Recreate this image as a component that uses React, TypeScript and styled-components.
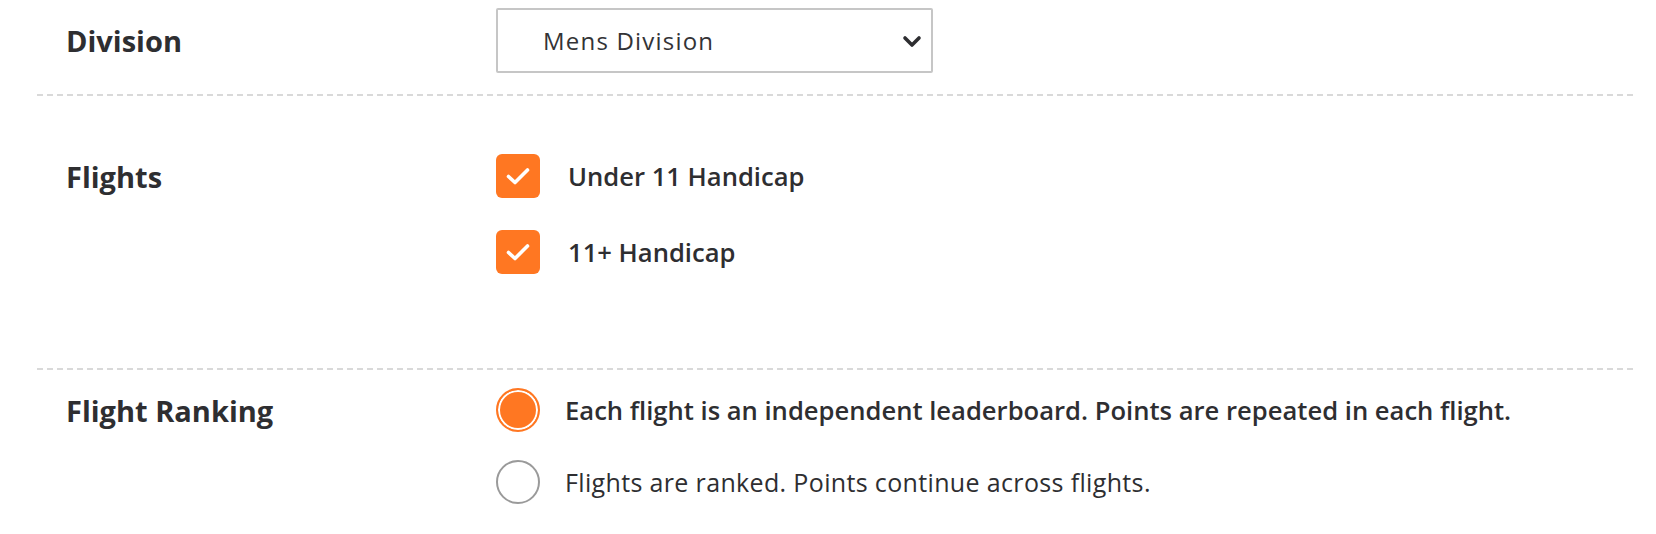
import React, { FC, ReactNode } from 'react';
import styled, { createGlobalStyle } from 'styled-components';

const GlobalStyle = createGlobalStyle`
    html, body {
        margin: 0;
        padding: 0;
        background: #ffffff;
    }
    body {
        font-family: 'Open Sans', Lato, sans-serif;
        color: #2e2e31;
    }
`;

const ORANGE = '#ff7722';

const StyledPage = styled.div`
    width: 1656px;
    padding: 0 19px 0 37px;
    box-sizing: border-box;
`;

const StyledRow = styled.div<{ $padTop: number; $padBottom: number; $divider: boolean }>`
    display: grid;
    grid-template-columns: 459px 1fr;
    align-items: start;
    padding-top: ${(p) => p.$padTop}px;
    padding-bottom: ${(p) => p.$padBottom}px;
    background: ${(p) =>
        p.$divider
            ? 'repeating-linear-gradient(to right, #d9d9d9 0 6px, transparent 6px 10px) left bottom / 100% 2px no-repeat'
            : 'none'};
`;

const StyledLabel = styled.div<{ $height: number }>`
    display: flex;
    align-items: center;
    height: ${(p) => p.$height}px;
    padding-left: 29px;
    font-size: 29px;
    font-weight: 700;
    color: #2e2e31;
`;

const StyledControls = styled.div<{ $gap: number }>`
    display: flex;
    flex-direction: column;
    gap: ${(p) => p.$gap}px;
`;

const StyledSelectBox = styled.div`
    position: relative;
    display: flex;
    align-items: center;
    justify-content: space-between;
    width: 437px;
    height: 65px;
    box-sizing: border-box;
    border: 2px solid #c6c6c6;
    border-radius: 2px;
    padding: 0 9px 0 45px;
    font-size: 24px;
    letter-spacing: 1.2px;
    color: #333336;
`;

const StyledOption = styled.label`
    display: flex;
    align-items: center;
    cursor: pointer;
`;

const StyledCheckbox = styled.span`
    display: flex;
    align-items: center;
    justify-content: center;
    width: 44px;
    height: 44px;
    flex: none;
    border-radius: 6px;
    background: ${ORANGE};
`;

const StyledRadio = styled.span<{ $checked: boolean }>`
    width: 44px;
    height: 44px;
    flex: none;
    box-sizing: border-box;
    border-radius: 50%;
    border: 2px solid ${(p) => (p.$checked ? ORANGE : '#9a9a9a')};
    background: ${(p) => (p.$checked ? ORANGE : '#ffffff')};
    box-shadow: ${(p) => (p.$checked ? 'inset 0 0 0 2px #ffffff' : 'none')};
`;

const StyledOptionText = styled.span<{ $bold: boolean; $gap: number }>`
    margin-left: ${(p) => p.$gap}px;
    font-size: ${(p) => (p.$bold ? 25.6 : 25)}px;
    font-weight: ${(p) => (p.$bold ? 600 : 400)};
    letter-spacing: ${(p) => (p.$bold ? 0 : 0.35)}px;
    color: #2e2e31;
    white-space: nowrap;
`;

const ChevronDown: FC = () => (
    <svg width="20" height="14" viewBox="0 0 20 14">
        <path d="M3 4 L10 11 L17 4" fill="none" stroke="#2e2e31" strokeWidth="3.6" strokeLinecap="round" strokeLinejoin="round" />
    </svg>
);

const CheckMark: FC = () => (
    <svg width="28" height="28" viewBox="0 0 28 28">
        <path d="M4.5 14.5 L11 20.5 L23.5 8" fill="none" stroke="#ffffff" strokeWidth="3.6" strokeLinecap="round" strokeLinejoin="round" />
    </svg>
);

type FormRowProps = {
    label: string;
    labelHeight: number;
    padTop: number;
    padBottom: number;
    divider?: boolean;
    gap?: number;
    children: ReactNode;
};

const FormRow: FC<FormRowProps> = (props) => (
    <StyledRow $padTop={props.padTop} $padBottom={props.padBottom} $divider={!!props.divider}>
        <StyledLabel $height={props.labelHeight}>{props.label}</StyledLabel>
        <StyledControls $gap={props.gap || 0}>{props.children}</StyledControls>
    </StyledRow>
);

const flights = ['Under 11 Handicap', '11+ Handicap'];

const rankings = [
    { text: 'Each flight is an independent leaderboard. Points are repeated in each flight.', checked: true },
    { text: 'Flights are ranked. Points continue across flights.', checked: false },
];

const App: FC = () => (
    <>
        <GlobalStyle />
        <StyledPage>
            <FormRow label="Division" labelHeight={65} padTop={8} padBottom={23} divider>
                <StyledSelectBox>
                    <span>Mens Division</span>
                    <ChevronDown />
                </StyledSelectBox>
            </FormRow>
            <FormRow label="Flights" labelHeight={44} padTop={58} padBottom={96} divider gap={32}>
                {flights.map((name) => (
                    <StyledOption key={name}>
                        <StyledCheckbox>
                            <CheckMark />
                        </StyledCheckbox>
                        <StyledOptionText $bold $gap={28}>
                            {name}
                        </StyledOptionText>
                    </StyledOption>
                ))}
            </FormRow>
            <FormRow label="Flight Ranking" labelHeight={44} padTop={18} padBottom={28} gap={28}>
                {rankings.map((r) => (
                    <StyledOption key={r.text}>
                        <StyledRadio $checked={r.checked} />
                        <StyledOptionText $bold={r.checked} $gap={25}>
                            {r.text}
                        </StyledOptionText>
                    </StyledOption>
                ))}
            </FormRow>
        </StyledPage>
    </>
);

export default App;
